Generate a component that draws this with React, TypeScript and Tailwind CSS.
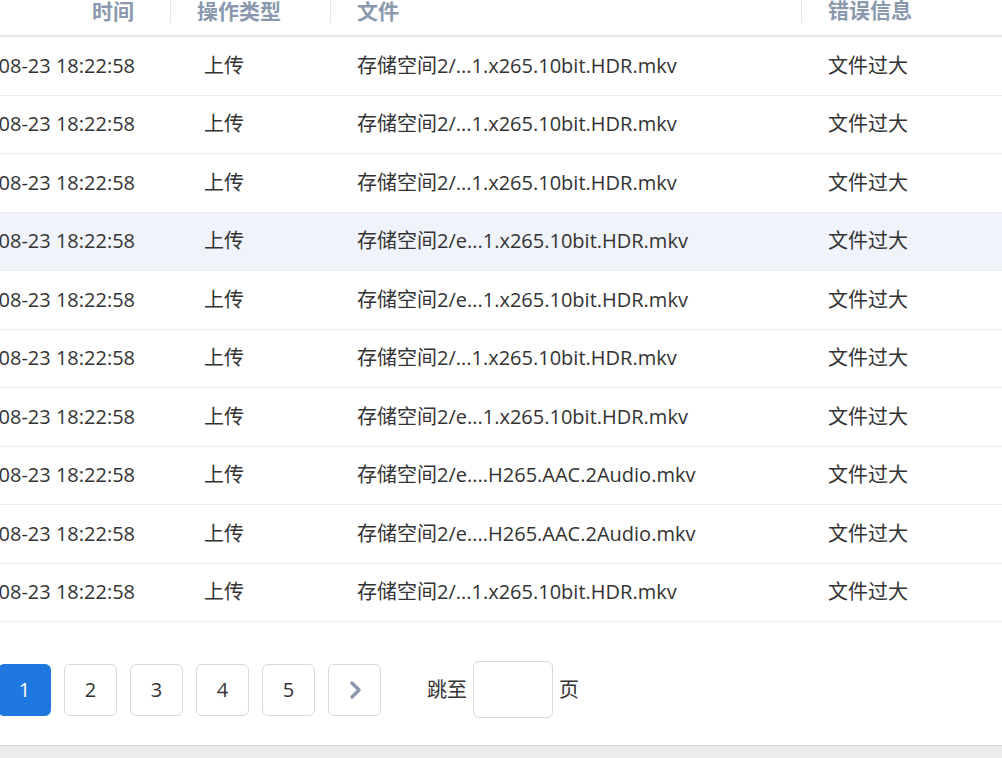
import React from "react";

const rows = [
  "存储空间2/...1.x265.10bit.HDR.mkv",
  "存储空间2/...1.x265.10bit.HDR.mkv",
  "存储空间2/...1.x265.10bit.HDR.mkv",
  "存储空间2/e...1.x265.10bit.HDR.mkv",
  "存储空间2/e...1.x265.10bit.HDR.mkv",
  "存储空间2/...1.x265.10bit.HDR.mkv",
  "存储空间2/e...1.x265.10bit.HDR.mkv",
  "存储空间2/e....H265.AAC.2Audio.mkv",
  "存储空间2/e....H265.AAC.2Audio.mkv",
  "存储空间2/...1.x265.10bit.HDR.mkv",
];

const font = { fontFamily: '"Open Sans", "Noto Sans CJK SC", sans-serif' };

export default function App() {
  return (
    <div className="w-[1002px] h-[758px] overflow-hidden bg-white relative text-[#333]" style={font}>
      <div className="-ml-[71px] -mt-[13px] w-[1100px]">
        <div className="flex h-[50px] items-center border-b-2 border-[#e4e8ee] text-[21px] font-bold text-[#8a99ad]">
          <div className="w-[242px] pr-[36px] h-[24px] leading-[24px] border-r border-[#e4e8ee] text-right">时间</div>
          <div className="w-[160px] pl-[26px] h-[24px] leading-[24px] border-r border-[#e4e8ee]">操作类型</div>
          <div className="w-[471px] pl-[26px] h-[24px] leading-[24px] border-r border-[#e4e8ee]">文件</div>
          <div className="pl-[26px]">错误信息</div>
        </div>
        {rows.map((f, i) => (
          <div
            key={i}
            className={`flex h-[58.5px] items-center border-b border-[#e8ebf0] text-[20px] ${i === 3 ? "bg-[#f0f3f9]" : ""}`}
          >
            <div className="w-[242px] pr-[36px] whitespace-nowrap flex justify-end overflow-visible">2022-08-23 18:22:58</div>
            <div className="w-[160px] pl-[33px]">上传</div>
            <div className="w-[471px] pl-[26px] whitespace-nowrap">{f}</div>
            <div className="pl-[26px]">文件过大</div>
          </div>
        ))}
      </div>
      <div className="flex items-center mt-[39px] -ml-[2px] gap-[13px] text-[20px]">
        <div className="w-[53px] h-[52px] rounded-md bg-[#1f78e0] text-white flex items-center justify-center">1</div>
        {["2", "3", "4", "5"].map((n) => (
          <div key={n} className="w-[53px] h-[52px] rounded-md border border-[#d5dae1] flex items-center justify-center">{n}</div>
        ))}
        <div className="w-[53px] h-[52px] rounded-md border border-[#d5dae1] flex items-center justify-center">
          <svg width="16" height="22" viewBox="0 0 16 22" fill="none" stroke="#8a99ad" strokeWidth="3.5" strokeLinecap="round" strokeLinejoin="round">
            <path d="M5 4l7 7-7 7" />
          </svg>
        </div>
        <div className="ml-[33px] flex items-center gap-[6px]">
          <span>跳至</span>
          <div className="w-[80px] h-[57px] rounded-md border border-[#d5dae1]" />
          <span>页</span>
        </div>
      </div>
      <div className="absolute left-0 right-0 bottom-0 h-[13px] bg-[#ececec] border-t border-[#d6d6d6]" />
    </div>
  );
}
